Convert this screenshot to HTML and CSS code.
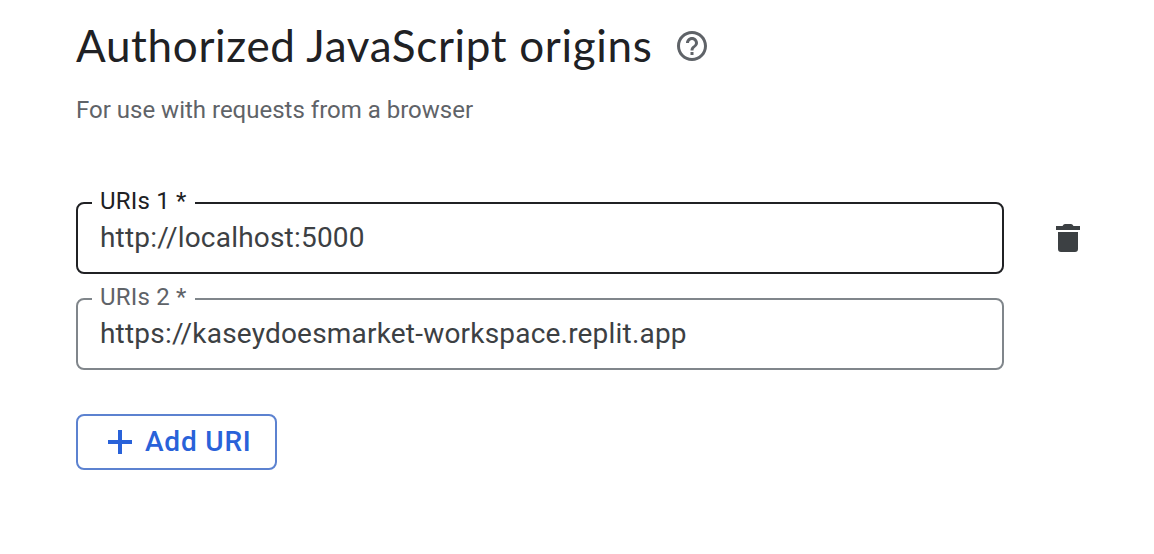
FILE: index.html
```html
<!DOCTYPE html>
<html lang="en">
<head>
<meta charset="utf-8">
<title>Authorized JavaScript origins</title>
<link rel="stylesheet" href="styles.css">
</head>
<body>
<main class="panel">
  <header class="heading">
    <h1 class="title">Authorized JavaScript origins</h1>
    <svg class="help" viewBox="0 0 24 24" width="36" height="36" aria-label="Help"><path d="M11 18h2v-2h-2v2zm1-16C6.480 2 2 6.480 2 12s4.480 10 10 10 10-4.480 10-10S17.520 2 12 2zm0 18c-4.410 0-8-3.590-8-8s3.590-8 8-8 8 3.590 8 8-3.590 8-8 8zm0-14c-2.210 0-4 1.790-4 4h2c0-1.100.9-2 2-2s2 .9 2 2c0 2-3 1.750-3 5h2c0-2.250 3-2.500 3-5 0-2.210-1.790-4-4-4z"/></svg>
  </header>
  <p class="hint">For use with requests from a browser</p>
  <div class="row">
    <fieldset class="field field-active"><legend class="label"><span class="label-text">URIs 1 *</span></legend><div class="value">http://localhost:5000</div></fieldset>
    <svg class="trash" viewBox="0 0 24 28" width="24" height="28" aria-label="Delete"><path d="M9 0h6q1.500 0 2.500 2H24v4H0V2h6.500Q7.500 0 9 0zM2 8h20v17a3 3 0 0 1-3 3H5a3 3 0 0 1-3-3z"/></svg>
  </div>
  <div class="row row-second">
    <fieldset class="field"><legend class="label"><span class="label-text">URIs 2 *</span></legend><div class="value">https://kaseydoesmarket-workspace.replit.app</div></fieldset>
  </div>
  <button class="add"><svg class="plus" viewBox="0 0 24 24" width="24" height="24"><path d="M10 0h4v10h10v4H14v10h-4V14H0v-4h10z"/></svg><span class="add-label">Add URI</span></button>
</main>
</body>
</html>
```
FILE: styles.css
```css
body { margin: 0; background: #fff; font-family: Roboto, sans-serif; color: #3c4043; }
.panel { padding: 20px 76px 0; }
.heading { display: flex; align-items: center; height: 52px; }
.title { flex: none; margin: 0; padding-bottom: 2px; width: 598px; font: 400 44px/50px Lato, sans-serif; letter-spacing: 0.67px; color: #202124; white-space: nowrap; }
.help { fill: #5f6368; }
.hint { margin: 22px 0 0; font-size: 24px; line-height: 32px; color: #5f6368; }
.row { display: flex; align-items: center; margin-top: 62px; height: 86px; }
.row-second { margin-top: 10px; }
.field { flex: none; box-sizing: border-box; width: 928px; height: 86px; margin: 0; padding: 0 22px 0 14px; border: 2px solid #80868b; border-radius: 8px; color: #5f6368; }
.field-active { border-color: #202124; color: #202124; }
.label { box-sizing: border-box; width: 103px; height: 30px; padding: 0 8px; font-size: 24px; }
.label-text { display: block; height: 30px; line-height: 26px; letter-spacing: 0.2px; white-space: nowrap; }
.value { padding-left: 8px; font-size: 28px; line-height: 40px; letter-spacing: 0.2px; color: #3c4043; }
.trash { flex: none; margin: 14px 0 0 52px; fill: #3c4043; }
.add { display: flex; align-items: center; box-sizing: border-box; width: 201px; height: 56px; margin-top: 44px; padding: 0 0 0 30px; border: 2px solid #5c82d0; border-radius: 8px; background: #fff; color: #2962d9; }
.plus { flex: none; fill: #2962d9; margin-right: 13px; }
.add-label { font: 500 28px/36px Roboto, sans-serif; letter-spacing: 0.8px; white-space: nowrap; }
```
